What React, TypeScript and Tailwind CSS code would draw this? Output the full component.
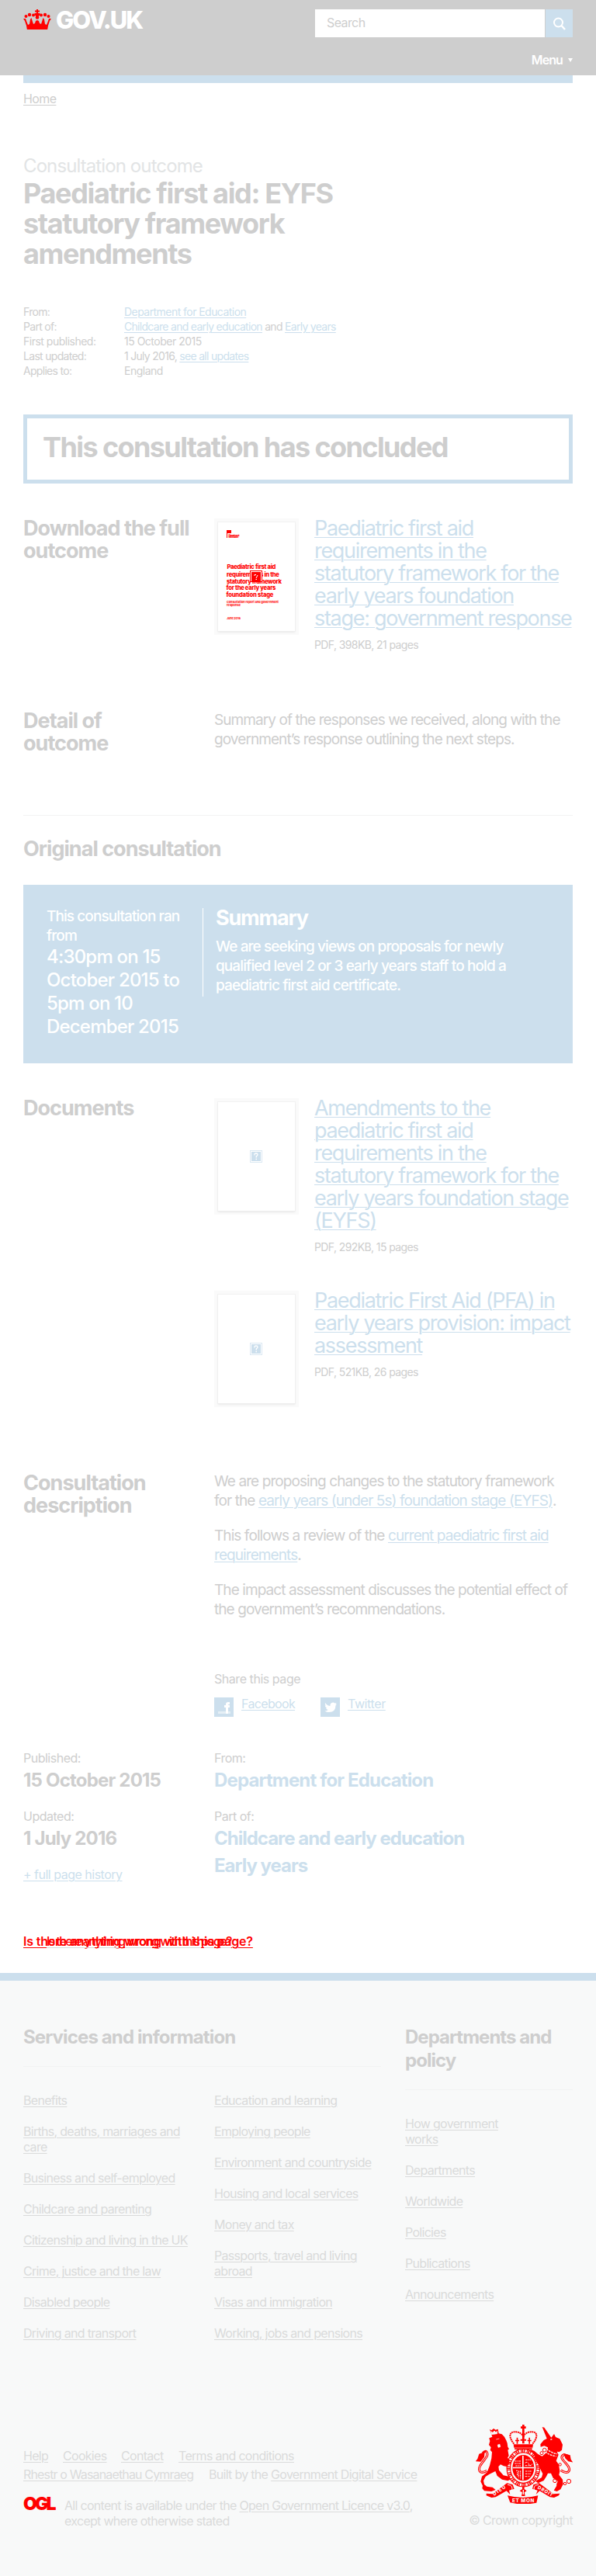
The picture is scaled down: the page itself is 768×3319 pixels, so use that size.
import type { ReactNode } from "react";

const link = "text-[#ccdfed] underline decoration-1 underline-offset-2";
const lead = "block whitespace-nowrap";

function Lines({ items }: { items: string[] }) {
  return (
    <>
      {items.map((t) => (
        <span key={t} className={lead}>
          <span>{t}</span>
        </span>
      ))}
    </>
  );
}

function Crown() {
  return (
    <svg className="h-[26px] w-9 shrink-0" viewBox="0 0 36 26" fill="#f00">
      <path d="M17 0h2v1.500h2v2h-2V5h2.500v3H20v3h-4V8h-1.500V5H17V3.500h-2v-2h2z" />
      <circle cx="3.500" cy="9" r="2" />
      <circle cx="8" cy="7" r="2.200" />
      <circle cx="13" cy="7.500" r="2" />
      <circle cx="18" cy="10.500" r="2.300" />
      <circle cx="23" cy="7.500" r="2" />
      <circle cx="28" cy="7" r="2.200" />
      <circle cx="32.500" cy="9" r="2" />
      <path d="M0 12h3l1 3 2 5 2-1 1-6 1.500-2L12 16l1 3 2-1 1-3 2-1 2 1 1 3 2 1 1-3 1.500-5 1.500 2 1 6 2 1 2-5 1-3h3l-2 3-2 6-1 6H5l-1-6-2-6z" />
      <path d="M5 20h26l-1 6H6z" />
    </svg>
  );
}

function Unknown({ x, y }: { x: number; y: number }) {
  return (
    <g transform={`translate(${x} ${y})`}>
      <rect x=".5" y=".5" width="15" height="15" fill="#fff" stroke="#dbe8f2" />
      <rect x="2" y="2" width="12" height="12" fill="#ccdfed" />
      <path d="M6 6.500V5q0-1 2-1t2 1.500Q10 7 8.500 7.500L8 9.500M7.500 11.500h1.500" fill="none" stroke="#fff" strokeWidth="1.300" />
    </g>
  );
}

function Thumb({ cover }: { cover?: boolean }) {
  return (
    <div className="mt-0.5 h-[150px] w-[109px] shrink-0 bg-[#fafafa] p-[5px]">
      <div className="h-[140px] w-[99px] bg-white shadow-[0_2px_2px_#ececec,0_0_1px_1px_#f2f2f2]">
        <svg className="block h-[140px] w-[99px]" viewBox="0 0 99 140">
          {cover ? (
            <g fill="#f00" fontFamily="Inter, sans-serif">
              <path d="M11 10h1v10h-1zM12 10h5v4h-5z" />
              <text x="13.500" y="17.500" fontSize="3.500" fontWeight="700" textLength="13">Department</text>
              <text x="13.500" y="20" fontSize="3.500" fontWeight="700" textLength="12">Education</text>
              <g fontSize="7.600" fontWeight="800">
                <text x="11.500" y="60" textLength="62">Paediatric first aid</text>
                <text x="11" y="69.500" textLength="67">requirements in the</text>
                <text x="11" y="78.500" textLength="70">statutory framework</text>
                <text x="10.500" y="87" textLength="63">for the early years</text>
                <text x="10.500" y="96" textLength="60">foundation stage</text>
              </g>
              <g fontSize="3.800" fontWeight="700">
                <text x="11" y="104" textLength="66">Consultation report and government</text>
                <text x="11" y="108" textLength="17">response</text>
                <text x="11" y="125" textLength="17">June 2016</text>
              </g>
              <rect x="41.500" y="62.500" width="15" height="14" fill="#fff" stroke="#f00" />
              <rect x="43" y="64" width="12" height="12" />
              <path d="M47 69v-1.500h2M51 68l-2 4M48.500 73.500h1.500" fill="none" stroke="#fff" />
            </g>
          ) : (
            <Unknown x={41} y={62} />
          )}
        </svg>
      </div>
    </div>
  );
}

function Doc({ title, meta, cover, className }: { title: string[]; meta: string; cover?: boolean; className: string }) {
  return (
    <div className={`flex gap-5 ${className}`}>
      <Thumb cover={cover} />
      <div>
        <a className={`block text-[27px] leading-[29px] tracking-[-1.3px] ${link}`}>
          <Lines items={title} />
        </a>
        <p className="mt-2.5 text-sm leading-[19px] tracking-[-0.6px]">{meta}</p>
      </div>
    </div>
  );
}

function Row({ title, children, className }: { title: string[]; children: ReactNode; className: string }) {
  return (
    <section className={`flex ${className}`}>
      <h2 className="w-[246px] shrink-0 text-[27px] leading-[29px] font-bold tracking-[-0.97px]">
        <Lines items={title} />
      </h2>
      <div className="text-[19px] leading-[25px] tracking-[-0.92px]">{children}</div>
    </section>
  );
}

function LinkList({ items, className }: { items: string[][]; className: string }) {
  return (
    <ul className={`flex flex-col gap-5 text-base leading-5 tracking-[-0.7px] ${className}`}>
      {items.map((i) => (
        <li key={i[0]} className="underline decoration-1 underline-offset-2">
          <Lines items={i} />
        </li>
      ))}
    </ul>
  );
}

function Crest() {
  return (
    <svg className="h-[102px] w-[125px]" viewBox="99 72 375 306" fill="#f00">
      {/* crown */}
      <path d="M279 72h8v7h6v8h-6v10h-8V87h-6v-8h6z" />
      <path d="M247 146c-18-20-22-45 1-46 14-1 30 4 35 20 5-16 21-21 35-20 23 1 19 26 1 46" fill="none" stroke="#f00" strokeWidth="6" strokeDasharray="6 2" />
      <path d="M279 95h8v50h-8zM245 148h76l-2 13h-72zM257 122h5v24h-5zM252 131h15v5h-15zM304 122h5v24h-5zM299 131h15v5h-15zM272 128h22v6h-22zM249 163h68v5h-68z" />
      {/* shield and garter */}
      <ellipse cx="283" cy="239" rx="57" ry="66" fill="none" stroke="#f00" strokeWidth="17" />
      <ellipse cx="283" cy="239" rx="57" ry="66" fill="none" stroke="#f8f9f9" strokeWidth="10" strokeDasharray="3 4 7 3 2 5" />
      <ellipse cx="283" cy="239" rx="42" ry="50" />
      <path d="M279 192h5v94h-5zM242 236h82v5h-82z" fill="#f8f9f9" />
      <path d="M250 213h25M250 222h25M253 231h20M292 208h20M290 220q10-8 14 4t14 0M290 230h24M255 250h5v22M265 250v28M272 250v30M291 252h24M291 262h20M290 272h18" fill="none" stroke="#f8f9f9" strokeWidth="3" strokeDasharray="7 3 4 2" />
      {/* lion */}
      <path d="M153 90l7 4 8-7 8 5 9-3 3 17 12 3 10 10 7 14 4 10 2 15 5 8-5 4 4 22-5 8 7 6-2 20-8 8-12-2-12-6-8 8 2 14 17 20 24 5 5 10-12 6-22-5-19-14-7-18-24 12-14 9-8 16 3 14 10 8 22 3 12 10-16 6-28-2-8-10 2-10-8-16 5-20 20-16 10-26 7-28 2-24-7-8 3-10-8-10 4-14-3-12 12-5z" />
      <path d="M158 98l7 5 6-7 6 6 5-5v10l-22 3zM178 129l12-3M184 150l8-2 2 10-8 2z" fill="#f8f9f9" stroke="#f8f9f9" strokeWidth="2" />
      <path d="M142 250c-30 16-38-4-20-28 14-20 30-32 18-46-4-3-10 2-14 6" fill="none" stroke="#f00" strokeWidth="9" />
      <path d="M142 250c-30 16-38-4-20-28 14-20 30-32 18-46" fill="none" stroke="#f8f9f9" strokeWidth="3" />
      <path d="M134 177l-22 8-6 19-8 10 20 1 14-18z" />
      {/* unicorn */}
      <path d="M356 81l8 2 27 39 11-14 6 12 16 7 11 22-3 21-10 8-9-2 6 12-9 24 10 14 4 26-3 14 14 18 2 18-10 20-14 8-12-4 10-16 5-20-18-12-8-18-12 0-6 12-10 16-22 10-10-8 24-14 4-14-8-16-6-14-12-22-8-8 4-10-10-12-12-6 6-6 14 6 14 12 16 8 12-10 8-12 2-12-14-6-14 4-1-10 13-16 12-6z" />
      <path d="M372 165q22 18 42 20M368 176q18 16 42 18M388 130l6-2" fill="none" stroke="#f8f9f9" strokeWidth="4" strokeDasharray="8 3" />
      <path d="M428 248c32 22 42-2 22-24-14-16-28-26-10-36l14 4" fill="none" stroke="#f00" strokeWidth="9" />
      <path d="M428 248c32 22 42-2 22-24-14-16-28-26-10-36" fill="none" stroke="#f8f9f9" strokeWidth="3" />
      <path d="M440 184l24 6 3 16 8 12-18-4-12-12z" />
      <g fill="none" stroke="#f00" strokeWidth="3">
        <circle cx="365" cy="170" r="7" />
        <circle cx="354" cy="182" r="6" />
        <circle cx="405" cy="289" r="7" />
        <circle cx="418" cy="302" r="5" />
        <circle cx="459" cy="291" r="8" />
        <circle cx="444" cy="300" r="5" />
        <circle cx="425" cy="226" r="5" />
      </g>
      {/* scroll */}
      <path d="M140 338l24 2 56-42 22 6 6 16-20 6 4 16-14-14-42 24-16 2-20-8zM424 338l-24 2-56-42-22 6-4 16 20 6-6 16 14-14 40 24 16 2 18-8z" />
      <path d="M222 346q60 16 118 0l-6 28-24 4h-52l-26-5z" />
      <path d="M279 312h8v9l9 7-9 6 3 14h-14l3-14-10-6 10-7z" />
      <path d="M283 324v18" stroke="#f8f9f9" strokeWidth="4" />
      <path d="M222 304q24 2 16 24 16 8 6 16M342 304q-24 2-16 24-16 8-6 16" fill="none" stroke="#f8f9f9" strokeWidth="3" />
      <g fill="#f8f9f9" fontFamily="Inter, sans-serif" fontWeight="800" fontSize="19">
        <text x="240" y="373" textLength="84">ET MON</text>
        <text transform="translate(170 347) rotate(-33)" fontSize="18" textLength="54">DIEU</text>
        <text transform="translate(337 318) rotate(30)" fontSize="18" textLength="64">DROIT</text>
      </g>
    </svg>
  );
}

export default function App() {
  return (
    <div className="h-[3319px] w-[768px] overflow-hidden bg-white font-['Inter',sans-serif] text-[#cecece]">
      <header className="h-[97px] bg-[#cecece] px-[30px] pt-3 text-white">
        <div className="flex justify-between">
          <div className="flex gap-1.5">
            <Crown />
            <span className="text-[31px] leading-7 font-extrabold tracking-[-2px]">GOV.UK</span>
          </div>
          <div className="flex gap-px">
            <div className="h-9 w-[296px] bg-white pl-[15px] text-base leading-[35px] tracking-[-0.6px] text-[#cecece]">Search</div>
            <div className="flex h-9 w-[35px] items-center justify-center bg-[#ccdfed]">
              <svg className="h-[17px] w-[17px]" viewBox="0 0 17 17" fill="none" stroke="#fff" strokeWidth="2">
                <circle cx="7.500" cy="7" r="5.500" />
                <path d="M11.500 11l4.500 5" strokeWidth="2.500" />
              </svg>
            </div>
          </div>
        </div>
        <div className="mt-[19px] flex items-center justify-end gap-[7px] text-base leading-5 font-semibold tracking-[-0.9px]">
          Menu
          <svg className="h-[5px] w-1.5" viewBox="0 0 6 5" fill="#fff">
            <path d="M0 0h6L3 5z" />
          </svg>
        </div>
      </header>

      <main className="px-[30px]">
        <div className="h-2.5 bg-[#ccdfed]" />
        <p className="mt-2.5 text-base leading-5 tracking-[-0.6px] underline decoration-1 underline-offset-2">Home</p>
        <p className="mt-[62px] text-2xl leading-[30px] tracking-[-0.9px] text-[#e2e4e5]">Consultation outcome</p>
        <h1 className="mt-px text-4xl leading-[39px] font-bold tracking-[-1.35px]">
          <Lines items={["Paediatric first aid: EYFS", "statutory framework", "amendments"]} />
        </h1>
        <dl className="mt-[45px] grid grid-cols-[130px_1fr] text-sm leading-[19px] tracking-[-0.7px]">
          <dt>From:</dt>
          <dd className="tracking-[-0.55px]"><a className={link}>Department for Education</a></dd>
          <dt>Part of:</dt>
          <dd><a className={link}>Childcare and early education</a> and <a className={link}>Early years</a></dd>
          <dt className="tracking-[-0.5px]">First published:</dt>
          <dd className="tracking-[-0.5px]">15 October 2015</dd>
          <dt>Last updated:</dt>
          <dd>1 July 2016, <a className={link}>see all updates</a></dd>
          <dt>Applies to:</dt>
          <dd className="tracking-[-0.5px]">England</dd>
        </dl>
        <div className="mt-[47px] h-[89px] border-5 border-[#ccdfed] px-5 pt-[18px] text-4xl leading-[39px] font-bold tracking-[-1.6px]">
          This consultation has concluded
        </div>

        <Row title={["Download the full", "outcome"]} className="mt-[43px] h-[248px]">
          <Doc
            cover
            className=""
            title={["Paediatric first aid", "requirements in the", "statutory framework for the", "early years foundation", "stage: government response"]}
            meta="PDF, 398KB, 21 pages"
          />
        </Row>
        <Row title={["Detail of", "outcome"]} className="h-[136px]">
          <p className="mt-px">
            <Lines items={["Summary of the responses we received, along with the", "government’s response outlining the next steps."]} />
          </p>
        </Row>

        <hr className="border-[#f2f3f3]" />
        <h2 className="mt-7 text-[27px] leading-[29px] font-bold tracking-[-0.97px]">Original consultation</h2>
        <div className="mt-8 flex h-[230px] bg-[#ccdfed] px-[30px] pt-[30px] font-medium text-white">
          <div className="w-[201px] text-[19px] leading-[25px] tracking-[-0.92px]">
            <div className="-mt-0.5">
              <Lines items={["This consultation ran", "from"]} />
            </div>
            <div className="text-2xl leading-[30px] tracking-[-0.8px]">
              <Lines items={["4:30pm on 15", "October 2015 to", "5pm on 10", "December 2015"]} />
            </div>
          </div>
          <div className="h-[114px] border-l border-white pl-4">
            <h3 className="-mt-0.5 text-[27px] leading-[29px] font-bold tracking-[-1.2px]">Summary</h3>
            <p className="mt-2.5 text-[19px] leading-[25px] tracking-[-0.9px]">
              <Lines items={["We are seeking views on proposals for newly", "qualified level 2 or 3 early years staff to hold a", "paediatric first aid certificate."]} />
            </p>
          </div>
        </div>

        <Row title={["Documents"]} className="mt-[43px] h-[483px]">
          <Doc
            className="h-[248px]"
            title={["Amendments to the", "paediatric first aid", "requirements in the", "statutory framework for the", "early years foundation stage", "(EYFS)"]}
            meta="PDF, 292KB, 15 pages"
          />
          <Doc className="" title={["Paediatric First Aid (PFA) in", "early years provision: impact", "assessment"]} meta="PDF, 521KB, 26 pages" />
        </Row>

        <Row title={["Consultation", "description"]} className="h-[359px]">
          <div className="flex flex-col gap-5 whitespace-nowrap">
            <p>
              We are proposing changes to the statutory framework
              <br />
              for the <a className={link}>early years (under 5s) foundation stage (EYFS)</a>.
            </p>
            <p>
              This follows a review of the <a className={link}>current paediatric first aid</a>
              <br />
              <a className={link}>requirements</a>.
            </p>
            <p>
              The impact assessment discusses the potential effect of
              <br />
              the government’s recommendations.
            </p>
          </div>
          <p className="mt-[67px] text-base leading-5 tracking-[-0.45px]">Share this page</p>
          <div className="mt-3.5 flex text-base leading-4 tracking-[-0.4px]">
            <a className="flex w-[137px] gap-2.5">
              <svg className="h-[25px] w-[25px]" viewBox="0 0 25 25">
                <path d="M0 0h25v25H0z" fill="#ccdfed" />
                <path d="M5 18h16v3H5z" fill="#e5eff6" />
                <path d="M15 21v-8h-2v-3h2V9q0-3 3-3h2v3h-1q-1 0-1 1h2v3h-2v8z" fill="#fff" />
              </svg>
              <span className={`${link} tracking-[-0.65px]`}>Facebook</span>
            </a>
            <a className="flex gap-2.5">
              <svg className="h-[25px] w-[25px]" viewBox="0 0 25 25">
                <path d="M0 0h25v25H0z" fill="#ccdfed" />
                <path d="M6 7q3 4 6.500 4Q12 7 16 6.500q1.500 0 2.500 1l2-.5-1 2 1.500-.3-1.500 1.800Q19.500 19 11 19q-3.500 0-5.500-1.500 2.500 0 4.300-1.500-2-.3-3-2.200h1.400Q6 13 5.700 10.300l1.400.3Q5 9 6 7z" fill="#fff" />
              </svg>
              <span className={link}>Twitter</span>
            </a>
          </div>
        </Row>

        <div className="flex h-[235px] text-2xl leading-[30px] font-bold tracking-[-0.8px]">
          <div className="w-[246px]">
            <p className="mb-1 text-base leading-5 font-normal tracking-[-0.5px]">Published:</p>
            <p>15 October 2015</p>
            <p className="mt-[21px] mb-1 text-base leading-5 font-normal tracking-[-0.5px]">Updated:</p>
            <p>1 July 2016</p>
            <p className={`mt-[21px] text-base leading-5 font-normal tracking-[-0.5px] ${link}`}>+ full page history</p>
          </div>
          <div className="tracking-[-1px]">
            <p className="mb-1 text-base leading-5 font-normal tracking-[-0.5px]">From:</p>
            <p className="tracking-[-0.85px] text-[#ccdfed]">Department for Education</p>
            <p className="mt-[21px] mb-1 text-base leading-5 font-normal tracking-[-0.5px]">Part of:</p>
            <p className="text-[#ccdfed]">Childcare and early education</p>
            <p className="mt-[5px] text-[#ccdfed]">Early years</p>
          </div>
        </div>
        <div className="relative -mt-px h-[53px] leading-5 font-semibold whitespace-nowrap text-[#f00]">
          <span className="text-base tracking-[-0.2px] underline decoration-1 underline-offset-2">Is there anything wrong with this page?</span>
          <span className="absolute top-0 left-[30px] text-base font-medium tracking-[-1.6px] underline decoration-[#dadbdb] decoration-1 underline-offset-2">
            Is there anything wrong with this page?
          </span>
        </div>
      </main>

      <footer className="h-[777px] border-t-10 border-[#ccdfed] bg-[#f8f9f9] px-[30px] pt-[58px] text-[#dadbdb]">
        <div className="flex h-[544px] gap-[31px]">
          <div className="w-[461px]">
            <h2 className="text-2xl leading-[30px] font-bold tracking-[-0.87px] text-[#cecece]">Services and information</h2>
            <hr className="mt-[22px] border-[#f2f3f3]" />
            <div className="mt-[33px] flex">
              <LinkList
                className="w-[246px]"
                items={[
                  ["Benefits"],
                  ["Births, deaths, marriages and", "care"],
                  ["Business and self-employed"],
                  ["Childcare and parenting"],
                  ["Citizenship and living in the UK"],
                  ["Crime, justice and the law"],
                  ["Disabled people"],
                  ["Driving and transport"],
                ]}
              />
              <LinkList
                className=""
                items={[
                  ["Education and learning"],
                  ["Employing people"],
                  ["Environment and countryside"],
                  ["Housing and local services"],
                  ["Money and tax"],
                  ["Passports, travel and living", "abroad"],
                  ["Visas and immigration"],
                  ["Working, jobs and pensions"],
                ]}
              />
            </div>
          </div>
          <div className="w-[216px]">
            <h2 className="text-2xl leading-[30px] font-bold tracking-[-0.97px] text-[#cecece]">
              <Lines items={["Departments and", "policy"]} />
            </h2>
            <hr className="mt-[22px] border-[#f2f3f3]" />
            <LinkList
              className="mt-[33px]"
              items={[["How government", "works"], ["Departments"], ["Worldwide"], ["Policies"], ["Publications"], ["Announcements"]]}
            />
          </div>
        </div>
        <div className="flex justify-between text-base leading-5 tracking-[-0.7px] whitespace-nowrap">
          <div>
            <div className="flex">
              <a className="w-[51px]"><u className="underline-offset-2">Help</u></a>
              <a className="w-[75px]"><u className="underline-offset-2">Cookies</u></a>
              <a className="w-[74px]"><u className="underline-offset-2">Contact</u></a>
              <a><u className="underline-offset-2">Terms and conditions</u></a>
            </div>
            <div className="mt-1 flex">
              <a className="w-[239px]"><u className="tracking-[-0.85px] underline-offset-2">Rhestr o Wasanaethau Cymraeg</u></a>
              <span>Built by the <u className="underline-offset-2">Government Digital Service</u></span>
            </div>
            <div className="mt-5 flex">
              <div className="w-[53px] text-[23px] leading-[17px] font-black tracking-[-2.9px] text-[#f00]">OGL</div>
              <p>
                All content is available under the <u className="underline-offset-2">Open Government Licence v3.0</u>,
                <br />
                except where otherwise stated
              </p>
            </div>
          </div>
          <div className="-mt-[30px] flex flex-col items-end">
            <Crest />
            <p className="mt-[11px] tracking-[-0.65px]">© Crown copyright</p>
          </div>
        </div>
      </footer>
    </div>
  );
}
